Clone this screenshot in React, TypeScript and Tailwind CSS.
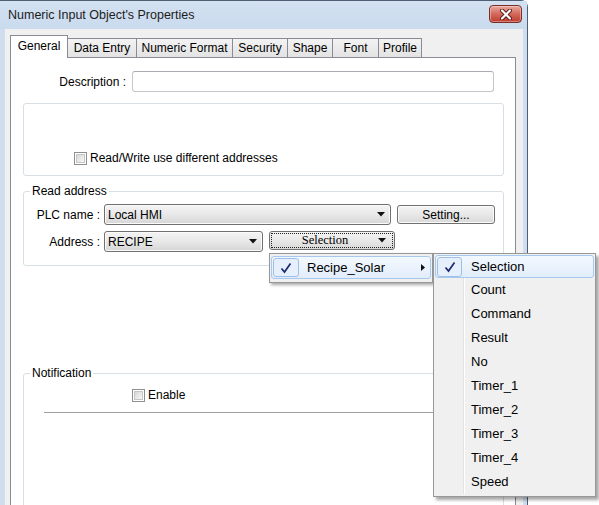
import React from "react";

const tabs = [
  { label: "General", w: "w-[58px]" },
  { label: "Data Entry", w: "w-[70px]" },
  { label: "Numeric Format", w: "w-[97px]" },
  { label: "Security", w: "w-[56px]" },
  { label: "Shape", w: "w-[46px]" },
  { label: "Font", w: "w-[47px]" },
  { label: "Profile", w: "w-[44px]" },
];

const fields = ["Count", "Command", "Result", "No", "Timer_1", "Timer_2", "Timer_3", "Timer_4", "Speed"];

const Arrow = () => (
  <svg width="8" height="5" viewBox="0 0 8 5">
    <polygon points="0,0 8,0 4,4.5" fill="#111" />
  </svg>
);

const Check = () => (
  <svg width="12" height="12" viewBox="0 0 12 12">
    <path d="M1.5 6.5 L4.5 10 L10.5 1.5" fill="none" stroke="#1d2a72" strokeWidth="1.7" />
  </svg>
);

const Checkbox = ({ label }: { label: string }) => (
  <div className="flex items-center gap-[3px]">
    <div className="h-[13px] w-[13px] border border-[#8e8f8f] bg-white p-[1px]">
      <div className="h-full w-full border border-[#c6c6c6] bg-gradient-to-br from-[#d9d9d9] to-[#f7f7f7]" />
    </div>
    <span>{label}</span>
  </div>
);

const Combo = ({ text, w }: { text: string; w: string }) => (
  <div
    className={`${w} flex h-[21px] items-center justify-between rounded-[3px] border border-[#707070] bg-gradient-to-b from-[#f4f4f4] via-[#e8e8e8] to-[#d6d6d6] pl-[3px] pr-[5px] shadow-[inset_0_0_0_1px_#fbfbfb]`}
  >
    <span>{text}</span>
    <Arrow />
  </div>
);

const ItemHighlight = ({ children }: { children: React.ReactNode }) => (
  <div className="flex h-full items-center rounded-[3px] border border-[#a8c9ee] bg-gradient-to-b from-[#f3f8fe] to-[#e2edfb]">
    {children}
  </div>
);

export default function App() {
  return (
    <div className="relative h-[505px] w-[599px] overflow-hidden bg-white font-['Liberation_Sans',sans-serif] text-[12px] text-black">
      {/* window */}
      <div className="flex h-[540px] w-[528px] flex-col rounded-tr-[7px] border-r border-t border-[#4d5f75] bg-[#cfddee]">
        <div className="flex h-[28px] items-start justify-between bg-gradient-to-b from-[#d3e1f1] to-[#cadbee] pl-[8px] pr-[5px]">
          <span className="mt-[6px] text-[12.5px] leading-[16px] text-[#1c1c1c]">Numeric Input Object's Properties</span>
          <div className="mt-[4px] flex h-[18px] w-[33px] items-center justify-center rounded-[4px] border border-[#7b2d26] bg-gradient-to-b from-[#e8a99e] via-[#d2685b] to-[#c0392f] shadow-[inset_0_0_0_1px_rgba(255,255,255,0.35)]">
            <svg width="14" height="11" viewBox="0 0 14 11">
              <path d="M3 1.5 L11 9.5 M11 1.5 L3 9.5" stroke="#5a1d18" strokeWidth="4" strokeLinecap="round" />
              <path d="M3 1.5 L11 9.5 M11 1.5 L3 9.5" stroke="#ffffff" strokeWidth="2.2" strokeLinecap="round" />
            </svg>
          </div>
        </div>

        <div className="ml-[5px] mr-[4px] flex flex-1 flex-col bg-[#f0f0f0] pl-[5px] pt-[6px]">
          {/* tabs */}
          <div className="flex h-[22px] items-end">
            {tabs.map((t, i) =>
              i === 0 ? (
                <div
                  key={t.label}
                  className={`${t.w} relative z-10 -mb-px flex h-[23px] items-center justify-center border-x border-t border-[#898c95] bg-white pb-[2px]`}
                >
                  {t.label}
                </div>
              ) : (
                <div
                  key={t.label}
                  className={`${t.w} -ml-px flex h-[19px] items-center justify-center border-x border-t border-[#898c95] bg-gradient-to-b from-[#f3f3f3] to-[#e3e3e3]`}
                >
                  {t.label}
                </div>
              )
            )}
          </div>

          {/* panel */}
          <div className="flex w-[506px] flex-1 flex-col border border-[#898c95] bg-white pl-[12px] pt-[13px]">
            <div className="flex h-[21px] items-center">
              <span className="w-[103px] text-right">Description :</span>
              <div className="ml-[6px] h-[21px] w-[362px] rounded-[3px] border border-[#c3c6cb] border-t-[#a9acb2]" />
            </div>

            <div className="mt-[11px] h-[73px] w-[481px] rounded-[3px] border border-[#d5dfe5] pl-[50px] pt-[45px]">
              <Checkbox label="Read/Write use different addresses" />
            </div>

            <fieldset className="mt-[8px] w-[481px] rounded-[3px] border border-[#d5dfe5] pb-[13px]">
              <legend className="ml-[6px] px-[2px] leading-[14px]">Read address</legend>
              <div className="mt-[6px] flex items-center">
                <span className="w-[76px] text-right">PLC name :</span>
                <div className="ml-[4px]">
                  <Combo text="Local HMI" w="w-[287px]" />
                </div>
                <div className="ml-[6px] flex h-[19px] w-[98px] items-center justify-center rounded-[3px] border border-[#707070] bg-gradient-to-b from-[#f4f4f4] via-[#e8e8e8] to-[#d9d9d9] shadow-[inset_0_0_0_1px_#fbfbfb]">
                  Setting...
                </div>
              </div>
              <div className="mt-[6px] flex items-start">
                <span className="flex h-[21px] w-[76px] items-center justify-end">Address :</span>
                <div className="ml-[4px]">
                  <Combo text="RECIPE" w="w-[159px]" />
                </div>
                <div className="ml-[6px] h-[19px] w-[126px] rounded-[3px] border border-[#707070] bg-gradient-to-b from-[#f4f4f4] via-[#e8e8e8] to-[#d9d9d9] p-[1px]">
                  <div className="flex h-full items-center border border-dotted border-[#222] pr-[6px]">
                    <span className="flex-1 text-center font-['Liberation_Serif',serif] text-[12.5px]">Selection</span>
                    <Arrow />
                  </div>
                </div>
              </div>
            </fieldset>

            <fieldset className="mt-[100px] h-[160px] w-[481px] rounded-[3px] border border-[#d5dfe5]">
              <legend className="ml-[6px] px-[2px] leading-[14px]">Notification</legend>
              <div className="mt-[6px] pl-[108px]">
                <Checkbox label="Enable" />
              </div>
              <div className="ml-[20px] mt-[8px] h-px w-[440px] bg-[#a0a0a0]" />
            </fieldset>
          </div>
        </div>
      </div>

      {/* address menu */}
      <div className="absolute left-[269px] top-[253px] h-[30px] w-[164px] border border-[#979797] bg-[#f0f0f0] px-[1px] pt-[2px] text-[13px] shadow-[2px_2px_3px_rgba(0,0,0,0.35)]">
        <div className="h-[23px]">
          <ItemHighlight>
            <div className="ml-[1px] flex h-[19px] w-[26px] items-center justify-center rounded-[3px] border border-[#9fc0e6] bg-[#e6f0fc]">
              <Check />
            </div>
            <span className="ml-[8px] flex-1">Recipe_Solar</span>
            <svg className="mr-[5px]" width="4" height="7" viewBox="0 0 4 7">
              <polygon points="0,0 4,3.5 0,7" fill="#111" />
            </svg>
          </ItemHighlight>
        </div>
      </div>

      {/* field submenu */}
      <div className="absolute left-[433px] top-[253px] h-[244px] w-[163px] border border-[#979797] bg-[#f0f0f0] text-[13px] shadow-[3px_3px_3px_rgba(0,0,0,0.35)]">
        <div className="absolute bottom-[2px] left-[29px] top-[2px] w-px bg-[#e2e3e3]" />
        <div className="absolute bottom-[2px] left-[30px] top-[2px] w-px bg-white" />
        <div className="relative flex flex-col">
          <div className="h-[24px] px-[1px] pt-[1px]">
            <ItemHighlight>
              <div className="ml-[1px] flex h-[20px] w-[25px] items-center justify-center rounded-[3px] border border-[#9fc0e6] bg-[#e6f0fc]">
                <Check />
              </div>
              <span className="ml-[9px]">Selection</span>
            </ItemHighlight>
          </div>
          {fields.map((f) => (
            <div key={f} className="flex h-[24px] items-center pl-[37px]">
              {f}
            </div>
          ))}
        </div>
      </div>
    </div>
  );
}
